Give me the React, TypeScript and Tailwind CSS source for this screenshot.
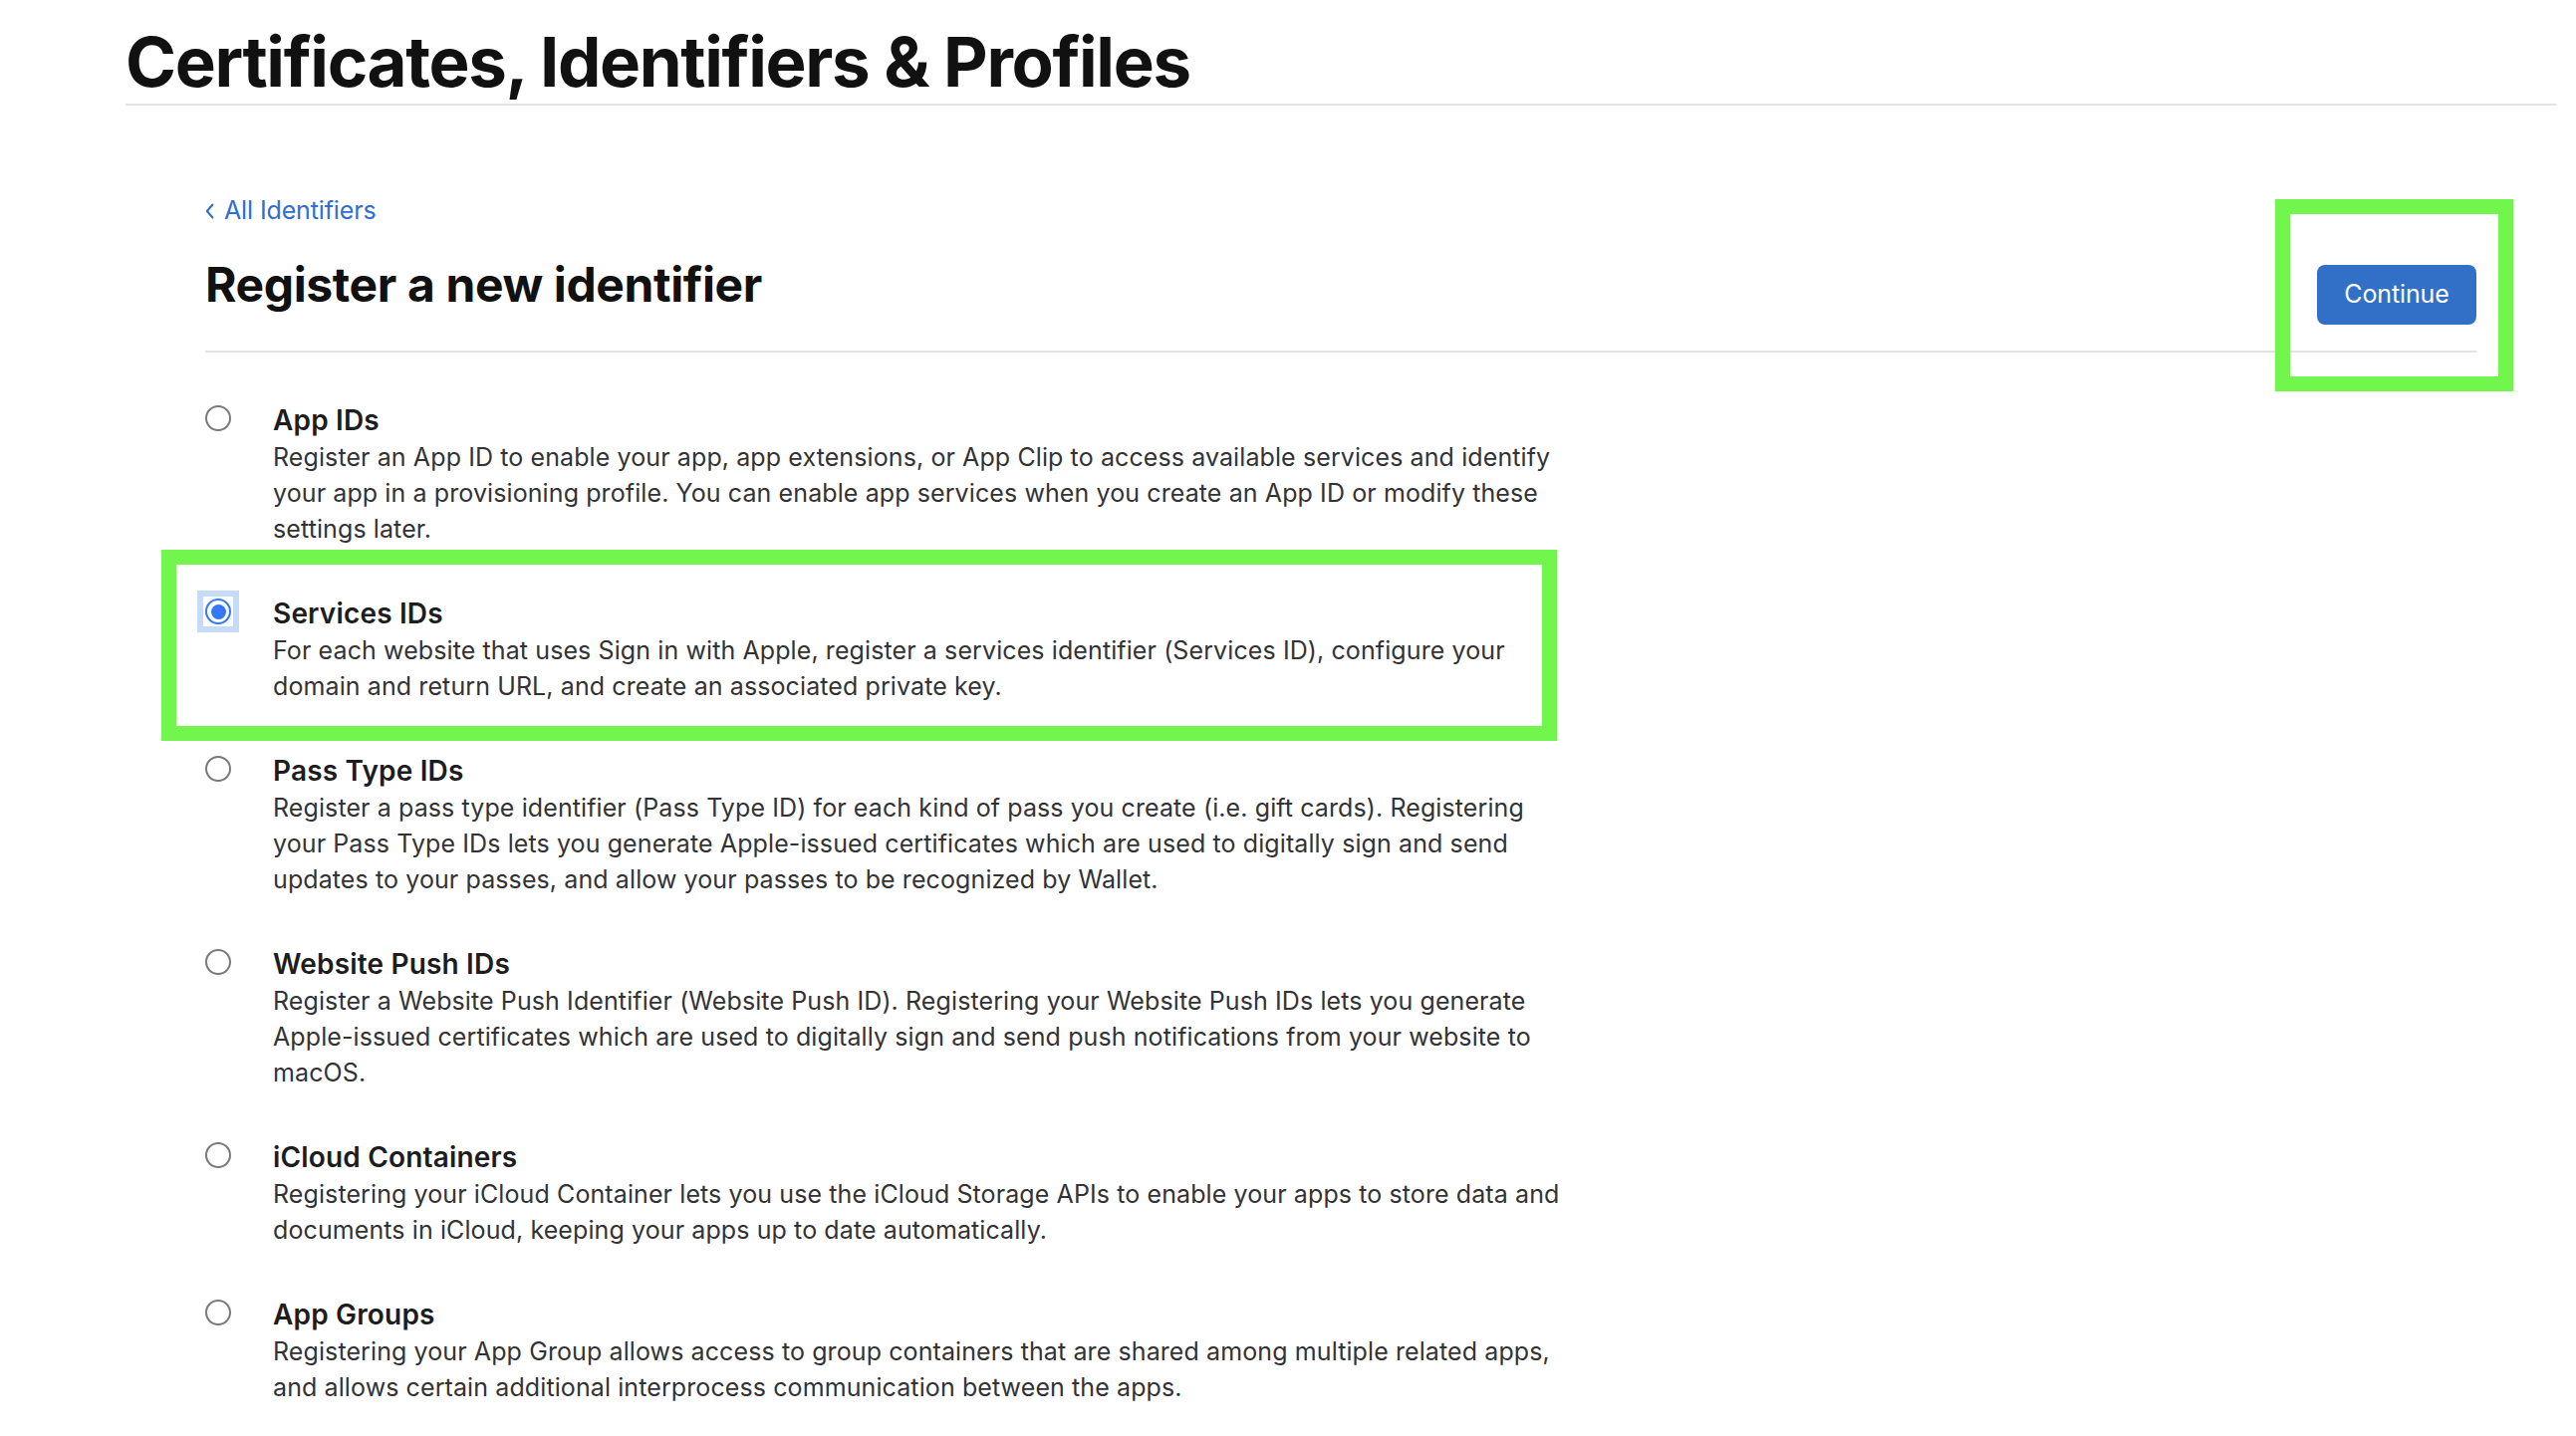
import React from "react";

type Identifier = {
  title: string;
  desc: string;
  selected?: boolean;
};

const IDENTIFIERS: Identifier[] = [
  {
    title: "App IDs",
    desc: "Register an App ID to enable your app, app extensions, or App Clip to access available services and identify your app in a provisioning profile. You can enable app services when you create an App ID or modify these settings later.",
  },
  {
    title: "Services IDs",
    desc: "For each website that uses Sign in with Apple, register a services identifier (Services ID), configure your domain and return URL, and create an associated private key.",
    selected: true,
  },
  {
    title: "Pass Type IDs",
    desc: "Register a pass type identifier (Pass Type ID) for each kind of pass you create (i.e. gift cards). Registering your Pass Type IDs lets you generate Apple-issued certificates which are used to digitally sign and send updates to your passes, and allow your passes to be recognized by Wallet.",
  },
  {
    title: "Website Push IDs",
    desc: "Register a Website Push Identifier (Website Push ID). Registering your Website Push IDs lets you generate Apple-issued certificates which are used to digitally sign and send push notifications from your website to macOS.",
  },
  {
    title: "iCloud Containers",
    desc: "Registering your iCloud Container lets you use the iCloud Storage APIs to enable your apps to store data and documents in iCloud, keeping your apps up to date automatically.",
  },
  {
    title: "App Groups",
    desc: "Registering your App Group allows access to group containers that are shared among multiple related apps, and allows certain additional interprocess communication between the apps.",
  },
];

function Radio({ selected }: { selected?: boolean }) {
  return (
    <div
      className={`mt-[1px] ml-[-2px] grid h-[30px] w-[30px] shrink-0 place-items-center bg-white ${
        selected ? "outline-[6px] outline-solid outline-[#c6dbf7]" : ""
      }`}
    >
      {selected ? (
        <span className="grid h-[26px] w-[26px] place-items-center rounded-full border-[2.5px] border-[#3478f6] bg-white">
          <span className="h-[15px] w-[15px] rounded-full bg-[#3478f6]" />
        </span>
      ) : (
        <span className="h-[26px] w-[26px] rounded-full border-2 border-[#7a7a7a] bg-white" />
      )}
    </div>
  );
}

export default function App() {
  return (
    <div className="relative min-h-screen bg-white font-['Inter',sans-serif] text-[#1d1d1f]">
      {/* page header */}
      <header className="ml-[126px] mr-[20px] border-b-2 border-[#e3e3e3] pt-[21px]">
        <h1 className="text-[69px] font-bold leading-[83px] tracking-[-0.02em] text-[#111111]">
          Certificates, Identifiers &amp; Profiles
        </h1>
      </header>

      <main className="ml-[206px] w-[2280px] pt-[87px]">
        <a className="flex items-center gap-[10px] text-[25px] leading-[36px] tracking-[-0.005em] text-[#2f6fcd]">
          <svg width="9" height="16" viewBox="0 0 9 16" fill="none" className="mt-[2px]">
            <path d="M7.5 1.5 1.8 8l5.7 6.5" stroke="currentColor" strokeWidth="2" strokeLinecap="round" strokeLinejoin="round" />
          </svg>
          All Identifiers
        </a>

        <div className="mt-[29px] flex items-start justify-between border-b-2 border-[#e3e3e3] pb-[26px]">
          <h2 className="text-[48px] font-bold leading-[56px] tracking-[-0.008em] text-[#111111]">Register a new identifier</h2>
          <button className="mt-[8px] h-[60px] w-[160px] rounded-[8px] bg-[#3170c6] text-[25px] tracking-[-0.005em] text-white">
            Continue
          </button>
        </div>

        <ul className="mt-[50px] flex flex-col gap-[49px]">
          {IDENTIFIERS.map((it) => (
            <li key={it.title} className="flex items-start">
              <Radio selected={it.selected} />
              <div className="ml-[40px] w-[1310px]">
                <p className="text-[28px] font-semibold leading-[37px] tracking-[0.006em] text-[#1d1d1f]">{it.title}</p>
                <p className="text-[25px] leading-[36px] tracking-[0.004em] text-[#333336]">{it.desc}</p>
              </div>
            </li>
          ))}
        </ul>
      </main>

      {/* annotation boxes over the screenshot */}
      <div className="pointer-events-none absolute left-[162px] top-[552px] h-[192px] w-[1401px] border-[15px] border-[#72f54c]" />
      <div className="pointer-events-none absolute left-[2284px] top-[200px] h-[193px] w-[239px] border-[15px] border-[#72f54c]" />
    </div>
  );
}
